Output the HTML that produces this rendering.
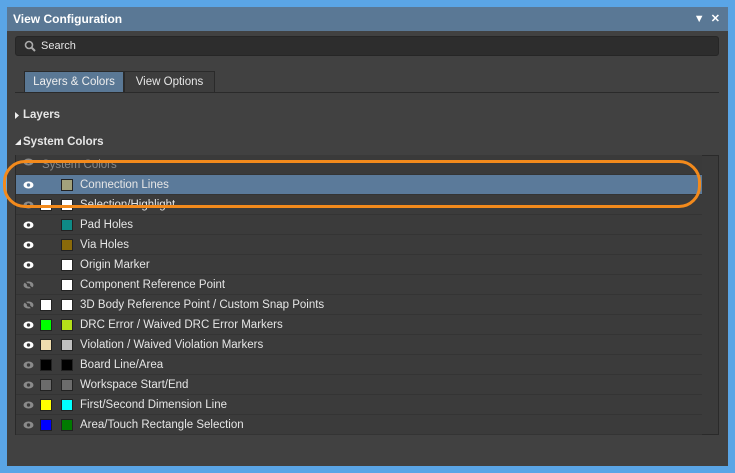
<!DOCTYPE html><html><head><style>
body{margin:0;width:735px;height:473px;background:#5aa5e6;font-family:"Liberation Sans",sans-serif;font-size:11px;color:#e6e6e6;position:relative;overflow:hidden}
.p{position:absolute;left:7px;top:7px;width:721px;height:459px;background:#414141}
.t{position:absolute;left:7px;top:7px;width:721px;height:24px;background:#5a7895;color:#fff;font-weight:bold;font-size:12px;line-height:24px;text-indent:6px}
.s{position:absolute;left:15px;top:36px;width:704px;height:20px;background:#2d2d2d;border-radius:3px;border:1px solid #262626;box-sizing:border-box}
.tab{position:absolute;top:71px;height:21px;line-height:21px;text-align:center;font-size:11.5px;border:1px solid #2a2a2a;border-bottom:none;box-sizing:border-box}
.tb{position:absolute;left:15px;top:155px;width:704px;height:280px;background:#3b3b3b;border:1px solid #2a2a2a;box-sizing:border-box}
.r{position:absolute;left:16px;width:686px;height:20px;line-height:20px;border-bottom:1px solid #343434;box-sizing:border-box;font-size:11.5px}
.r span{position:absolute;left:64px}
.sw{position:absolute;top:4px;width:12px;height:12px;box-sizing:border-box;border:1px solid #222}
.e{position:absolute;left:7px;top:6px;width:11px;height:8px}
.h{position:absolute;left:23px;font-weight:bold;font-size:11.5px}
</style></head><body>
<div class="p"></div>
<div class="t">View Configuration<span style="position:absolute;right:8px;font-size:11px">▼&nbsp;&nbsp;✕</span></div>
<div class="s"><svg style="position:absolute;left:8px;top:3px" width="12" height="12"><circle cx="5" cy="5" r="3.5" stroke="#aaa" stroke-width="1.6" fill="none"/><line x1="7.5" y1="7.5" x2="11" y2="11" stroke="#aaa" stroke-width="2"/></svg><span style="position:absolute;left:25px;top:3px">Search</span></div>
<div class="tab" style="left:24px;width:100px;background:#5a7895;color:#eee">Layers &amp; Colors</div>
<div class="tab" style="left:124px;width:91px;background:#3d3d3d">View Options</div>
<div style="position:absolute;left:15px;top:92px;width:704px;height:1px;background:#2a2a2a"></div>
<svg style="position:absolute;left:15px;top:112px" width="5" height="7"><path d="M0 0L4 3.5L0 7Z" fill="#eee"/></svg>
<div class="h" style="top:109px">Layers</div>
<svg style="position:absolute;left:15px;top:139px" width="6" height="6"><path d="M6 0L6 6L0 6Z" fill="#eee"/></svg>
<div class="h" style="top:136px">System Colors</div>
<div class="tb"></div>
<div class="r" style="top:155px;color:#888;background:#3a3a3a"><svg class="e" viewBox="0 0 11 8" style="top:3px"><ellipse cx="5.5" cy="4" rx="5" ry="3.5" fill="#888"/><circle cx="5.5" cy="4" r="1.6" fill="#3a3a3a"/></svg><span style="left:26px">System Colors</span></div>
<div id="rows"></div>
<script>
var R=[["Connection Lines",1,null,"#a3a27c",1],["Selection/Highlight",0,"#fff","#fff",0],["Pad Holes",1,null,"#0e8a86"],["Via Holes",1,null,"#8a6a0a"],["Origin Marker",1,null,"#fff"],["Component Reference Point",2,null,"#fff"],["3D Body Reference Point / Custom Snap Points",2,"#fff","#fff"],["DRC Error / Waived DRC Error Markers",1,"#00ff00","#b5e01a"],["Violation / Waived Violation Markers",1,"#efdcaf","#c0c0c0"],["Board Line/Area",0,"#000","#000"],["Workspace Start/End",0,"#6c6c6c","#6c6c6c"],["First/Second Dimension Line",0,"#ffff00","#00ffff"],["Area/Touch Rectangle Selection",0,"#0000ff","#007a00"]];
var h="";R.forEach(function(r,i){var y=175+i*20;var c=r[1]==1?"#fff":"#8a8a8a";var bg=r[4]?"background:#5b7a9a;":"";
var eye='<svg class="e" viewBox="0 0 11 8"><ellipse cx="5.5" cy="4" rx="5" ry="3.5" fill="'+c+'"/><circle cx="5.5" cy="4" r="1.7" fill="'+(r[4]?"#5b7a9a":"#3b3b3b")+'"/>'+(r[1]==2?'<line x1="1" y1="0" x2="10" y2="8" stroke="#3b3b3b" stroke-width="1.5"/>':'')+'</svg>';
h+='<div class="r" style="top:'+y+'px;'+bg+'">'+eye+(r[2]?'<div class="sw" style="left:24px;background:'+r[2]+'"></div>':'')+'<div class="sw" style="left:45px;background:'+r[3]+'"></div><span>'+r[0]+'</span></div>';});
document.getElementById("rows").innerHTML=h;
</script>
<div style="position:absolute;left:3px;top:160px;width:692px;height:42px;border:3px solid #f38a1c;border-radius:22px"></div>
</body></html>
